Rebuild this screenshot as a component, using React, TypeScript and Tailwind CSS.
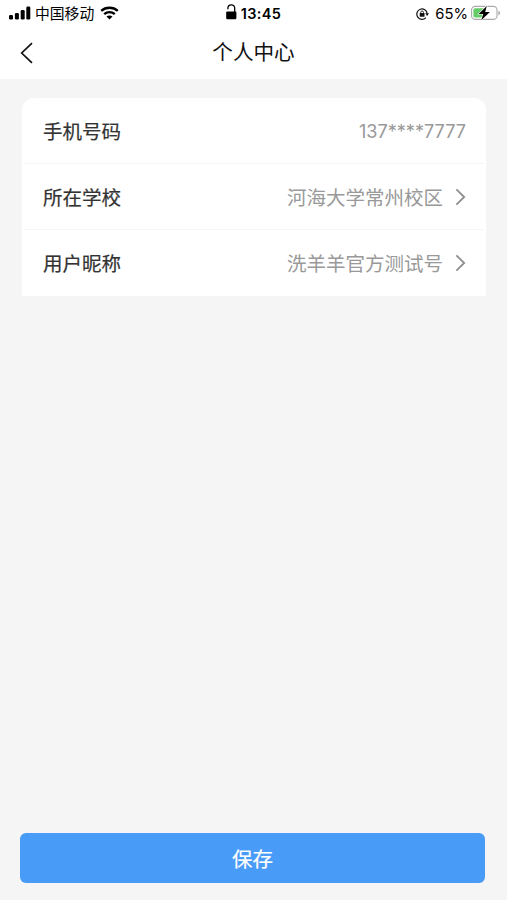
const rows = [
  { label: '手机号码', value: '137****7777', link: false },
  { label: '所在学校', value: '河海大学常州校区', link: true },
  { label: '用户昵称', value: '洗羊羊官方测试号', link: true },
];

function Signal() {
  return (
    <svg width="22" height="14" viewBox="0 0 22 14" fill="#000" className="mb-px shrink-0">
      <rect x="0" y="9" width="4" height="4.6" rx="1.3" />
      <rect x="5.9" y="6.9" width="4" height="6.7" rx="1.3" />
      <rect x="11.7" y="4" width="4" height="9.6" rx="1.3" />
      <rect x="17.3" y="0.6" width="4" height="13" rx="1.3" />
    </svg>
  );
}

function Wifi() {
  return (
    <svg width="19" height="14" viewBox="0 0 19 14" fill="none" stroke="#000" strokeWidth="2.4" className="mb-px shrink-0">
      <path d="M1.2 4.9C5.8.7 13.2.7 17.8 4.9" />
      <path d="M4.2 8.2C7.2 5.4 11.8 5.4 14.8 8.2" />
      <path d="M6.5 10.6C8.2 9 10.8 9 12.5 10.6L9.5 13.6Z" fill="#000" stroke="none" />
    </svg>
  );
}

function Unlock() {
  return (
    <svg width="11" height="16" viewBox="0 0 11 16" className="shrink-0">
      <path d="M1.9 4.8V4C1.9 2.1 3.3 0.8 5.3 0.8S8.7 2.1 8.7 4V9" fill="none" stroke="#000" strokeWidth="1.3" strokeLinecap="round" />
      <rect x="0.2" y="7.4" width="10.2" height="7.8" rx="1.2" />
    </svg>
  );
}

function RotationLock() {
  return (
    <svg width="13" height="12" viewBox="0 0 13 12" className="shrink-0">
      <path d="M9.9 9.6A5.2 5.2 0 1 1 11.2 5.6" fill="none" stroke="#111" strokeWidth="1.2" />
      <path d="M9.2 5.2H13L11.1 8.1Z" fill="#111" />
      <path d="M4.7 5.6V4.4a1.4 1.4 0 0 1 2.8 0V5.6" fill="none" stroke="#111" strokeWidth="0.9" />
      <rect x="3.7" y="5.1" width="4.8" height="3.6" rx="0.5" fill="#111" />
    </svg>
  );
}

function Battery() {
  return (
    <svg width="30" height="16" viewBox="0 0 30 16" className="mb-px shrink-0">
      <rect x="0.6" y="1.4" width="25.4" height="13" rx="3.7" fill="#fff" stroke="#aaa" strokeWidth="1.1" />
      <path d="M4.3 3.2H13.5V12.6H4.3A2 2 0 0 1 2.4 10.7V5.1A2 2 0 0 1 4.3 3.2Z" fill="#65cb68" />
      <path d="M27.4 5.8V10.2C29.7 9.4 29.7 6.6 27.4 5.8Z" fill="#aaa" />
      <path d="M15.8 0.9L7.6 9H12.3L10.2 15.2L18.9 7H14.2Z" fill="#000" stroke="#fff" strokeWidth="1.1" paintOrder="stroke" />
    </svg>
  );
}

function Chevron() {
  return (
    <svg width="11" height="18" viewBox="0 0 11 18" fill="none" stroke="#8f8f8f" strokeWidth="1.8" className="mb-px ml-3 shrink-0">
      <path d="M1.4 1.4L9.2 9L1.4 16.6" />
    </svg>
  );
}

export default function App() {
  return (
    <div className="flex h-[900px] w-[507px] flex-col bg-[#f5f5f5] font-['Inter','Noto_Sans_CJK_SC',sans-serif]">
      <header className="h-[79px] bg-white">
        <div className="grid h-[27px] grid-cols-3 items-center text-black">
          <div className="flex h-[27px] items-center pl-[9px]">
            <Signal />
            <span className="ml-1 pt-[2px] text-[14.8px] leading-none whitespace-nowrap">中国移动</span>
            <span className="ml-[6px]"><Wifi /></span>
          </div>
          <div className="flex items-center justify-center gap-1">
            <span className="-mt-[4px]"><Unlock /></span>
            <span className="pt-px text-[14.5px] leading-none font-semibold tracking-[0.35px]">13:45</span>
          </div>
          <div className="flex items-center justify-end pr-[6px]">
            <RotationLock />
            <span className="mr-[3px] ml-[6px] pt-[2px] text-[14.8px] leading-none">65%</span>
            <Battery />
          </div>
        </div>
        <div className="grid h-[52px] grid-cols-[1fr_auto_1fr] items-center">
          <button aria-label="返回" className="pl-5">
            <svg width="13" height="22" viewBox="0 0 13 22" fill="none" stroke="#111" strokeWidth="1.7">
              <path d="M12 1.2L1.7 11L12 20.8" />
            </svg>
          </button>
          <h1 className="pt-px text-[20.6px] leading-none text-[#111]">个人中心</h1>
        </div>
      </header>
      <main className="flex flex-1 flex-col pt-[19px]">
        <section className="mr-[21px] ml-[22px] rounded-t-[12px] bg-white">
          {rows.map((row, i) => (
            <div key={row.label} className={i < 2 ? 'flex h-[66px] flex-col pt-px' : 'flex h-[66px] flex-col'}>
              <div className="flex flex-1 items-center pr-5 pl-[21px]">
                <span className="pt-[3px] text-[19.5px] leading-none text-[#333] [-webkit-text-stroke:0.2px_#333]">
                  {row.label}
                </span>
                <span
                  className={
                    row.link
                      ? 'ml-auto pt-[3px] text-[19.5px] leading-none text-[#999]'
                      : 'ml-auto pt-px text-[18.1px] leading-none text-[#999]'
                  }
                >
                  {row.value}
                </span>
                {row.link && <Chevron />}
              </div>
              {i < 2 && <div className="mx-[2px] h-px bg-[#f5f5f5]" />}
            </div>
          ))}
        </section>
        <button className="mt-auto mr-[22px] mb-[17px] ml-5 h-[50px] rounded-[6px] bg-[#489bf7] pt-[4px] text-[20.5px] leading-none text-white [-webkit-text-stroke:0.2px_#fff]">
          保存
        </button>
      </main>
    </div>
  );
}
